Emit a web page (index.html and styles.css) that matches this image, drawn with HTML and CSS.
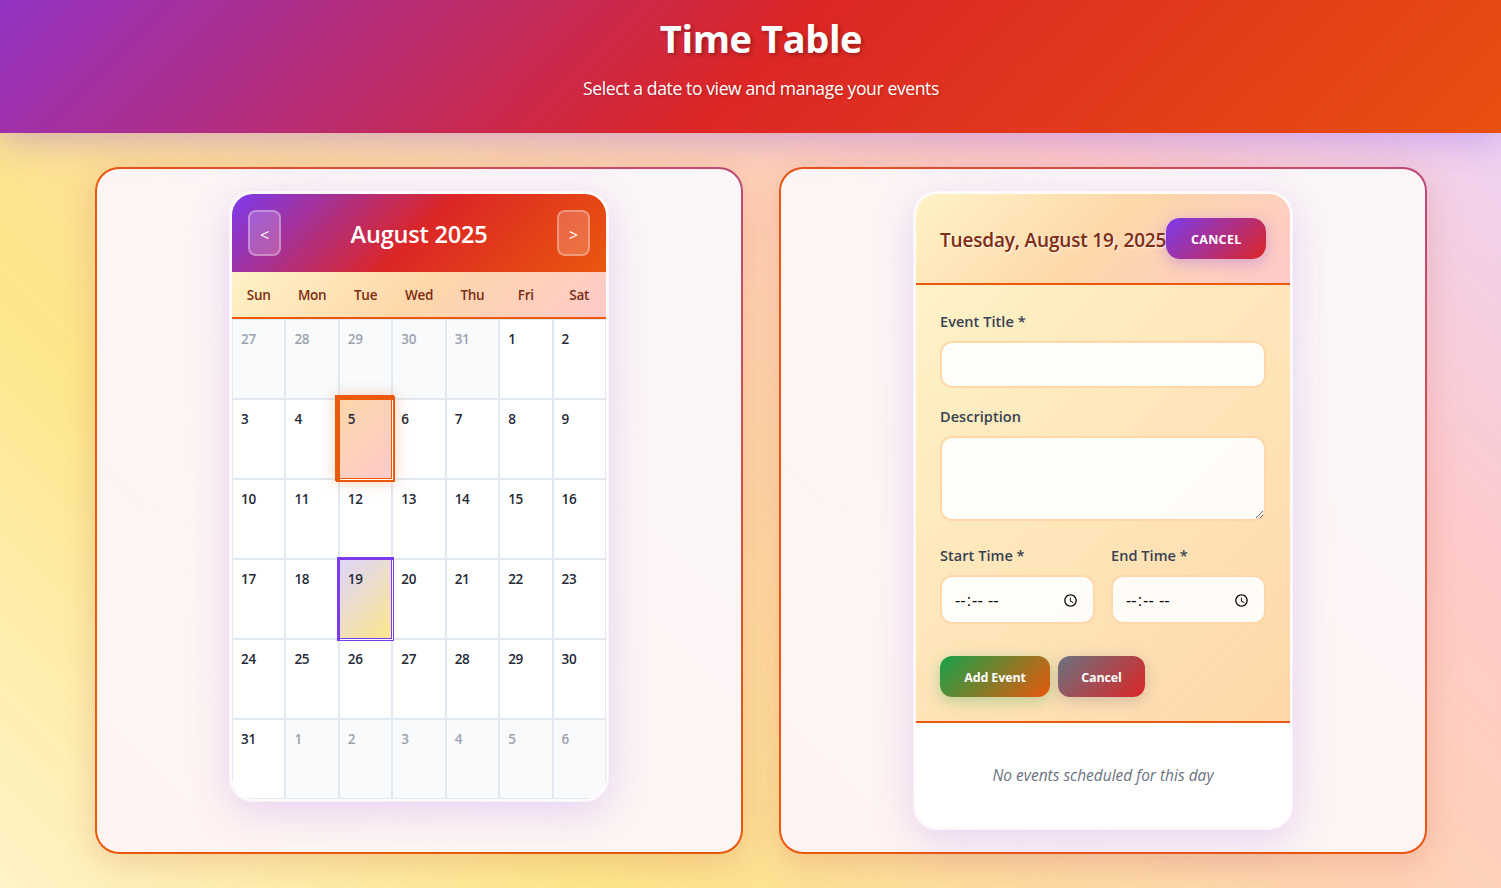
FILE: index.html
```html
<!DOCTYPE html>
<html lang="en">

<head>
    <meta charset="UTF-8">
    <meta name="viewport" content="width=device-width, initial-scale=1.0">
    <title>Time Table</title>
    <link rel="stylesheet" href="styles.css">
</head>

<body>
    <div class="app">
        <header class="top">
            <h1>Time Table</h1>
            <p>Select a date to view and manage your events</p>
        </header>

        <main class="panels">
            <section class="panel">
                <div class="card">
                    <div class="cal-head">
                        <button class="nav" type="button">&lt;</button>
                        <h2>August 2025</h2>
                        <button class="nav" type="button">&gt;</button>
                    </div>
                    <div class="weekdays">
                        <span>Sun</span><span>Mon</span><span>Tue</span><span>Wed</span><span>Thu</span><span>Fri</span><span>Sat</span>
                    </div>
                    <div class="days">
                        <div class="day other">27</div>
                        <div class="day other">28</div>
                        <div class="day other">29</div>
                        <div class="day other">30</div>
                        <div class="day other">31</div>
                        <div class="day">1</div>
                        <div class="day">2</div>
                        <div class="day">3</div>
                        <div class="day">4</div>
                        <div class="day today">5</div>
                        <div class="day">6</div>
                        <div class="day">7</div>
                        <div class="day">8</div>
                        <div class="day">9</div>
                        <div class="day">10</div>
                        <div class="day">11</div>
                        <div class="day">12</div>
                        <div class="day">13</div>
                        <div class="day">14</div>
                        <div class="day">15</div>
                        <div class="day">16</div>
                        <div class="day">17</div>
                        <div class="day">18</div>
                        <div class="day selected">19</div>
                        <div class="day">20</div>
                        <div class="day">21</div>
                        <div class="day">22</div>
                        <div class="day">23</div>
                        <div class="day">24</div>
                        <div class="day">25</div>
                        <div class="day">26</div>
                        <div class="day">27</div>
                        <div class="day">28</div>
                        <div class="day">29</div>
                        <div class="day">30</div>
                        <div class="day">31</div>
                        <div class="day other">1</div>
                        <div class="day other">2</div>
                        <div class="day other">3</div>
                        <div class="day other">4</div>
                        <div class="day other">5</div>
                        <div class="day other">6</div>
                    </div>
                </div>
            </section>

            <section class="panel">
                <div class="card">
                    <div class="date-head">
                        <h3>Tuesday, August 19, 2025</h3>
                        <button class="btn-top" type="button">Cancel</button>
                    </div>
                    <form class="event-form">
                        <div class="field">
                            <label>Event Title *</label>
                            <input class="title-input" type="text">
                        </div>
                        <div class="field field-area">
                            <label>Description</label>
                            <textarea></textarea>
                        </div>
                        <div class="time-row">
                            <div class="field">
                                <label>Start Time *</label>
                                <input type="time">
                            </div>
                            <div class="field">
                                <label>End Time *</label>
                                <input type="time">
                            </div>
                        </div>
                        <div class="actions">
                            <button class="btn btn-add" type="button">Add Event</button>
                            <button class="btn btn-cancel" type="button">Cancel</button>
                        </div>
                    </form>
                    <div class="events">
                        <p>No events scheduled for this day</p>
                    </div>
                </div>
            </section>
        </main>
    </div>
</body>

</html>
```
FILE: styles.css
```css
/* reset start */
* {
    padding: 0;
    margin: 0;
    box-sizing: border-box;
}

html,
body {
    height: 100%;
    overflow: hidden;
}

body {
    font-family: "Open Sans", "Noto Sans", sans-serif;
    color: #1f2937;
}

/* reset end */


/* structure start */
.app {
    width: 1522px;
    min-height: 888px;
    background: linear-gradient(45deg, #fef3c7 0%, #fde68a 25%, #fed7aa 50%, #fecaca 75%, #e9d5ff 100%);
}

.top {
    position: relative;
    z-index: 2;
    width: 1501px;
    padding: 14px 0 33px 21px;
    text-align: center;
    color: #fff;
    background: linear-gradient(135deg, #9333c4 0%, #dc2626 50%, #e8500f 100%);
    box-shadow: 0 8px 32px rgba(124, 58, 237, .3);
}

.top h1 {
    font-size: 38px;
    line-height: 48px;
    font-weight: 700;
    letter-spacing: -.4px;
    margin-bottom: 14px;
    text-shadow: 2px 2px 4px rgba(0, 0, 0, .3);
}

.top p {
    font-size: 17.6px;
    line-height: 24px;
    letter-spacing: -.41px;
    text-shadow: 1px 1px 2px rgba(0, 0, 0, .2);
}

.panels {
    display: grid;
    grid-template-columns: 648px 648px;
    gap: 36px;
    padding: 34px 95px;
}

.panel {
    display: flex;
    justify-content: center;
    align-items: flex-start;
    padding: 22px 0;
    border: 2px solid transparent;
    border-radius: 24px;
    background:
        linear-gradient(45deg, #fff4f1, #fbf6f7) padding-box,
        linear-gradient(45deg, #ea580c 0%, #e8560f 50%, #bb4a7c 100%) border-box;
    box-shadow: 0 8px 32px rgba(190, 70, 60, .2);
}

.card {
    width: 380px;
    border: 3px solid rgba(255, 255, 255, .6);
    border-radius: 24px;
    overflow: hidden;
    background: #fff;
    background-clip: padding-box;
    box-shadow: 0 10px 40px rgba(124, 58, 237, .18);
}

/* calendar */
.cal-head {
    display: flex;
    align-items: center;
    justify-content: space-between;
    padding: 16px;
    color: #fff;
    background: linear-gradient(135deg, #7c3aed 0%, #dc2626 50%, #ea580c 100%);
}

.cal-head h2 {
    padding-top: 2px;
    font-size: 23.5px;
    line-height: 32px;
    font-weight: 600;
    letter-spacing: -.2px;
}

.nav {
    width: 33px;
    height: 46px;
    padding-top: 4px;
    font-family: inherit;
    font-size: 16px;
    color: #fff;
    border: 2px solid rgba(255, 255, 255, .3);
    border-radius: 8px;
    background: rgba(255, 255, 255, .2);
}

.weekdays {
    display: grid;
    grid-template-columns: repeat(7, 1fr);
    height: 47px;
    align-items: center;
    text-align: center;
    font-size: 13.5px;
    font-weight: 600;
    letter-spacing: -.25px;
    color: #7c2d12;
    border-bottom: 2px solid #ea580c;
    background: linear-gradient(135deg, #fef3c7 0%, #fed7aa 50%, #fecaca 100%);
}

.days {
    display: grid;
    grid-template-columns: repeat(7, 1fr);
    grid-auto-rows: 80px;
}

.day {
    padding: 9px 8px;
    font-size: 13.5px;
    line-height: 20px;
    font-weight: 600;
    letter-spacing: -.3px;
    border: 1px solid #e2e8f0;
    background: #fff;
}

.other {
    color: #9ca3af;
    background: #f8fafc;
}

.today {
    position: relative;
    z-index: 1;
    padding: 10px 9px;
    border: 0;
    background: linear-gradient(135deg, #fed7aa, #fecaca);
    box-shadow:
        inset 1px 1px 0 #ea580c,
        inset -1px -1px 0 #ea580c,
        1px 1px 0 0 #fff,
        0 0 0 3px #ea580c,
        -1px -1px 0 3px #ea580c,
        0 0 14px 3px rgba(234, 88, 12, .3);
}

.selected {
    position: relative;
    z-index: 1;
    padding: 10px 9px;
    border: 0;
    background: linear-gradient(135deg, #ddd6fe, #fde68a);
    box-shadow:
        inset 1px 1px 0 #7c3aed,
        inset -1px -1px 0 #7c3aed,
        1px 1px 0 0 #fff,
        0 0 0 2px #7c3aed;
}

/* right side */
.date-head {
    display: flex;
    align-items: center;
    justify-content: space-between;
    padding: 24px;
    border-bottom: 2px solid #ea580c;
    background: linear-gradient(135deg, #fef3c7 0%, #fed7aa 50%, #fecaca 100%);
}

.date-head h3 {
    padding-top: 2px;
    font-size: 19px;
    line-height: 28px;
    font-weight: 600;
    letter-spacing: -.17px;
    white-space: nowrap;
    color: #7c2d12;
    text-shadow: 1px 1px 2px rgba(255, 255, 255, .8);
}

.btn-top {
    flex: none;
    width: 100px;
    height: 41px;
    padding-top: 1px;
    font-family: inherit;
    font-size: 12.5px;
    font-weight: 700;
    letter-spacing: .3px;
    text-transform: uppercase;
    color: #fff;
    border: 0;
    border-radius: 14px;
    background: linear-gradient(135deg, #7c3aed, #dc2626);
    box-shadow: 0 4px 15px rgba(124, 58, 237, .3);
}

.event-form {
    padding: 24px;
    border-bottom: 2px solid #ea580c;
    background: linear-gradient(135deg, #fef3c7, #fed7aa);
}

.field {
    margin-bottom: 16px;
}

.field-area {
    margin-bottom: 22px;
}

.field label {
    display: block;
    margin-bottom: 6px;
    font-size: 14.5px;
    line-height: 26px;
    font-weight: 600;
    letter-spacing: .05px;
    color: #374151;
}

.field input,
.field textarea {
    display: block;
    width: 100%;
    padding: 12px 13px;
    font-family: inherit;
    font-size: 14px;
    border: 2px solid #fed7aa;
    border-radius: 12px;
    background: rgba(255, 255, 255, .9);
}

.title-input {
    height: 47px;
}

.field textarea {
    height: 85px;
}

.field input[type="time"] {
    height: 49px;
    padding: 12px 15px 10px 12px;
    font-family: "Liberation Sans", sans-serif;
    font-size: 16px;
}

.field input::-webkit-calendar-picker-indicator {
    width: 15px;
    height: 15px;
    padding: 0;
}

.time-row {
    display: grid;
    grid-template-columns: 1fr 1fr;
    gap: 16px;
}

.actions {
    display: flex;
    gap: 8px;
    padding-top: 16px;
}

.btn {
    height: 41px;
    padding-top: 1px;
    font-family: inherit;
    font-size: 12.5px;
    font-weight: 700;
    letter-spacing: -.15px;
    color: #fff;
    border: 0;
    border-radius: 12px;
}

.btn-add {
    width: 110px;
    background: linear-gradient(135deg, #16a34a, #ea580c);
    box-shadow: 0 4px 15px rgba(22, 163, 74, .3);
}

.btn-cancel {
    width: 87px;
    background: linear-gradient(135deg, #6b7280, #dc2626);
    box-shadow: 0 4px 15px rgba(107, 114, 128, .3);
}

.events {
    height: 104px;
    display: flex;
    align-items: center;
    justify-content: center;
    background: #fff;
}

.events p {
    font-size: 15.5px;
    font-style: italic;
    color: #6b7280;
}

/* structure end */
```
